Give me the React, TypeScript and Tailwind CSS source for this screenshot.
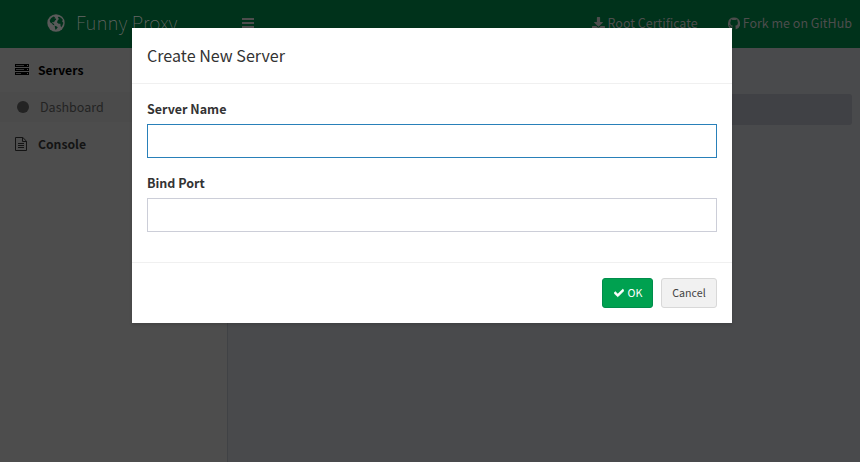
import { FaDownload, FaCheck } from "react-icons/fa";

function GlobeIcon() {
  return (
    <svg width="18" height="18" viewBox="0 0 17 17">
      <circle cx="8.5" cy="8.5" r="8.2" fill="#5a5a5a" />
      <path fill="#00321b" d="M6.2 2.3 4 3.7 2.600 5.800l.3 2.100 1.500.8 1.400 1.600 1.300.3-.9-1.600-1.300-.4.3-1.100 1.400.2 1.200-1.700.9-.6-.4-1.100-1.300-.3.7-.9zM10.700 2.600l-.5 1.200 1.200.8-1.500 1.700-.4 1.700 1.500 1.100 1.700.2.1 2.100.7 1.200 1.200-2 .8-2.400-1.200-1 .6-1.800-1.400-1.700-1.500-.9zM7.300 11.200l1.500.4 1.400 1-1.100 1.400-.8 1.100-.7-1.700z" />
    </svg>
  );
}

function ServerIcon() {
  return (
    <svg width="14" height="12" viewBox="0 0 14 12" shapeRendering="crispEdges">
      <path fill="#000" d="M0 0h14v3H0zM0 4h14v3H0zM0 8h14v3H0z" />
      <path fill="#383838" d="M1 1h8v1H1zM1 5h8v1H1zM1 9h5v1H1z" />
      <path fill="#4d4d4d" d="M12 1h1v1h-1zM12 5h1v1h-1zM12 9h1v1h-1z" />
    </svg>
  );
}

function FileIcon() {
  return (
    <svg width="12" height="14" viewBox="0 0 12 14" fill="none" stroke="currentColor">
      <path d="M.5.5h7.3l3.7 3.7v9.3H.5zM7.5.5v4h4M3 6.5h6M3 8.5h6M3 10.5h6" />
    </svg>
  );
}

function GithubIcon() {
  return (
    <svg width="12" height="13" viewBox="0 0 12 13" fill="currentColor">
      <path d="M6 .6a6 6 0 0 0-1.9 11.7c.3.1.4-.1.4-.3v-1.4c-1.8.3-2.2-.8-2.3-1.1-.2-.3-.4-.6-.7-.8-.4-.2-.4-.4 0-.4.6 0 1 .6 1.2.9.5.8 1.2.7 1.9.4 0-.4.2-.7.4-.9-1.4-.2-2.7-.7-2.7-3 0-.6.2-1.2.6-1.6-.2-.5-.2-1.1.1-1.6 0 0 .5-.1 1.6.6a5.700 5.700 0 0 1 3 0c1.100-.7 1.600-.6 1.600-.6.3.5.3 1.100.1 1.600.4.4.6 1 .6 1.600 0 2.300-1.400 2.800-2.700 3 .2.2.4.500.4 1.100V12c0 .2.1.4.4.3A6 6 0 0 0 6 .6Z" />
    </svg>
  );
}

export default function App() {
  return (
    <div className="relative h-[462px] w-[860px] overflow-hidden bg-[#494a4c] font-['Noto_Sans_CJK_SC',sans-serif] text-[12.5px] text-[#333]">
      <header className="flex h-12 bg-[#00321b] text-[#4d4d4d]">
        <div className="flex w-[228px] items-start pl-[47px] pt-[14px]">
          <GlobeIcon />
          <span className="ml-[11px] mt-[-6px] whitespace-nowrap text-[19px] font-thin leading-[28px] text-[#686868]">Funny Proxy</span>
        </div>
        <div className="flex w-[40px] flex-col gap-[2px] pl-[14px] pt-[18px]">
          <i className="h-[2px] w-3 bg-current" />
          <i className="h-[2px] w-3 bg-current" />
          <i className="h-[2px] w-3 bg-current" />
        </div>
        <nav className="ml-auto flex h-[46px] items-center pr-2">
          <a className="flex items-center gap-[3px] whitespace-nowrap"><FaDownload className="size-[13px]" />Root Certificate</a>
          <a className="ml-[30px] flex items-center gap-[3px] whitespace-nowrap"><GithubIcon />Fork me on GitHub</a>
        </nav>
      </header>
      <div className="flex h-[414px]">
        <aside className="w-[228px] border-r border-[#404245] bg-[#4d4d4d] text-[12.2px] font-bold">
          <div className="flex h-11 items-center gap-[9px] pl-[15px] text-black"><ServerIcon />Servers</div>
          <div className="flex h-[30px] items-center gap-[11px] bg-[#4b4b4b] pl-[17px] text-[12.5px] font-normal text-[#232323]">
            <i className="size-3 rounded-full bg-[#232323]" />
            <span>Dashboard</span>
          </div>
          <div className="flex h-11 items-center gap-[11px] pl-[15px] text-[#141414]"><FileIcon />Console</div>
        </aside>
        <main className="flex-1 pr-2 pt-[46px]"><div className="h-[31px] rounded-[3px] bg-[#404145]" /></main>
      </div>
      <section role="dialog" className="absolute left-[132px] top-[28px] flex h-[295px] w-[600px] flex-col bg-white shadow-[0_2px_3px_rgba(0,0,0,0.125)]">
        <h4 className="h-[56px] border-b border-[#f0f0f0] px-[15px] pt-[15px] text-[16.1px] leading-6">Create New Server</h4>
        <div className="flex h-[179px] flex-col border-b border-[#f0f0f0] px-[15px] pt-[15px]">
          <label className="h-[25px] font-bold leading-[20px]">Server Name</label>
          <input className="h-[34px] shrink-0 border border-[#2980b9] outline-none" />
          <label className="mt-[15px] h-[25px] font-bold leading-[20px]">Bind Port</label>
          <input className="h-[34px] shrink-0 border border-[#ccced8] outline-none" />
        </div>
        <footer className="flex justify-end gap-2 px-[15px] pt-[15px] text-[10.7px]">
          <button className="flex h-[30px] w-[51px] items-center justify-center gap-[4px] rounded-[3px] border border-[#008d4c] bg-[#00a150] pl-px text-white"><FaCheck className="size-[10px] stroke-white stroke-[36]" />OK</button>
          <button className="h-[30px] w-14 rounded-[3px] border border-[#d8d8d8] bg-[#f1f1f1] text-[#444]">Cancel</button>
        </footer>
      </section>
    </div>
  );
}
